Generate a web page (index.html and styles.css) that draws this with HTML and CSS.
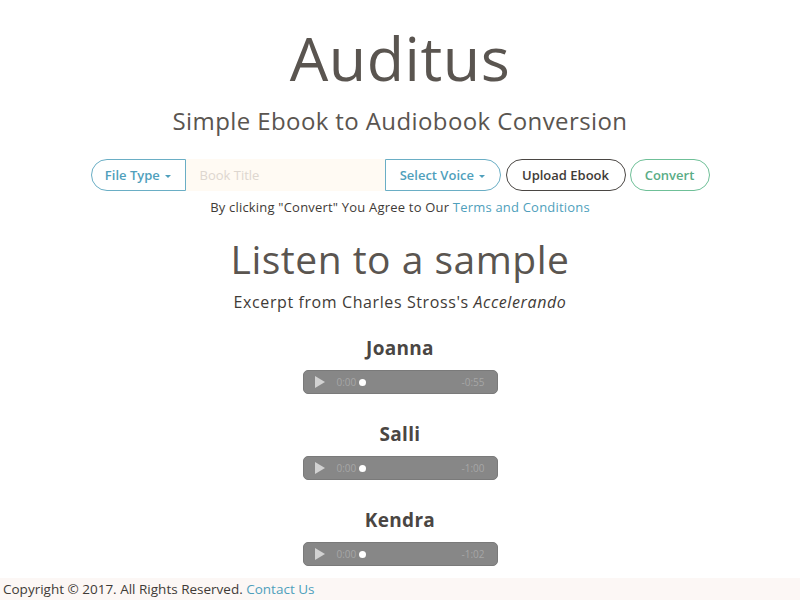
FILE: index.html
```html
<!DOCTYPE html>
<html lang="en">
<head>
<meta charset="utf-8">
<title>Auditus</title>
<link rel="stylesheet" href="styles.css">
</head>
<body>
<main class="page">
  <header class="hero">
    <h1 class="title">Auditus</h1>
    <h2 class="subtitle">Simple Ebook to Audiobook Conversion</h2>
  </header>
  <form class="convert-form">
    <div class="controls">
      <div class="group">
        <button type="button" class="btn btn-teal btn-left">File Type <span class="caret"></span></button>
        <input class="book-title" type="text" placeholder="Book Title">
        <button type="button" class="btn btn-teal btn-right">Select Voice <span class="caret"></span></button>
      </div>
      <button type="button" class="btn btn-dark">Upload Ebook</button>
      <button type="button" class="btn btn-green">Convert</button>
    </div>
    <p class="terms">By clicking "Convert" You Agree to Our <a href="#">Terms and Conditions</a></p>
  </form>
  <section class="samples">
    <h2 class="samples-title">Listen to a sample</h2>
    <p class="excerpt">Excerpt from Charles Stross's <em>Accelerando</em></p>
    <div class="sample">
      <h3 class="voice">Joanna</h3>
      <div class="player"><span class="play"></span><span class="time">0:00</span><span class="knob"></span><span class="remain">-0:55</span></div>
    </div>
    <div class="sample">
      <h3 class="voice">Salli</h3>
      <div class="player"><span class="play"></span><span class="time">0:00</span><span class="knob"></span><span class="remain">-1:00</span></div>
    </div>
    <div class="sample">
      <h3 class="voice">Kendra</h3>
      <div class="player"><span class="play"></span><span class="time">0:00</span><span class="knob"></span><span class="remain">-1:02</span></div>
    </div>
  </section>
</main>
<footer class="footer">Copyright © 2017. All Rights Reserved. <a href="#">Contact Us</a></footer>
</body>
</html>
```

FILE: styles.css
```css
* { box-sizing: border-box; }
html, body { margin: 0; padding: 0; }
body {
  font-family: "Open Sans", "Liberation Sans", sans-serif;
  color: #5a5550;
  background: #fff;
  width: 800px;
  height: 600px;
  overflow: hidden;
  display: flex;
  flex-direction: column;
}
.page {
  flex: 1;
  min-height: 0;
  overflow: hidden;
  display: flex;
  flex-direction: column;
  align-items: center;
}
.hero { text-align: center; padding-top: 20px; }
.title {
  margin: 0;
  font-size: 61px;
  font-weight: 400;
  line-height: 76px;
  letter-spacing: 0.5px;
}
.subtitle {
  margin: 10px 0 0;
  font-size: 24px;
  font-weight: 400;
  line-height: 30px;
  letter-spacing: 0.4px;
}
.convert-form { margin-top: 23px; text-align: center; }
.controls { display: flex; align-items: center; gap: 4px; }
.group { display: flex; align-items: stretch; height: 32px; }
.btn {
  font-family: inherit;
  font-size: 13px;
  font-weight: 600;
  background: #fff;
  height: 32px;
  padding: 0 8px;
  border: 1px solid;
  border-radius: 16px;
  white-space: nowrap;
  cursor: pointer;
}
.btn-teal { color: #4f9fbc; border-color: #6aaec5; }
.btn-left { border-radius: 16px 0 0 16px; width: 95px; }
.btn-right { border-radius: 0 16px 16px 0; width: 116px; }
.caret {
  display: inline-block;
  width: 0; height: 0;
  border-left: 3px solid transparent;
  border-right: 3px solid transparent;
  border-top: 3px solid currentColor;
  vertical-align: middle;
  margin-left: 2px;
}
.book-title {
  width: 199px;
  height: 32px;
  border: none;
  background: #fffaf3;
  font-family: inherit;
  font-size: 13px;
  padding: 0 14px;
  outline: none;
}
.book-title::placeholder { color: #ddd6cf; }
.btn-dark { color: #3f3b37; border: 1.5px solid #4a4643; width: 120px; margin-left: 1px; }
.btn-green { color: #5aac86; border: 1.5px solid #6fc098; width: 80px; }
.terms { margin: 8px 0 0; font-size: 13px; line-height: 16px; color: #3f3b37; letter-spacing: 0.2px; }
a { color: #4f9fbc; text-decoration: none; }
.samples { display: flex; flex-direction: column; align-items: center; }
.samples-title {
  margin: 19px 0 0;
  font-size: 39px;
  font-weight: 400;
  line-height: 50px;
  letter-spacing: 0.5px;
}
.excerpt { margin: 8px 0 0; font-size: 16px; line-height: 20px; color: #3f3b37; letter-spacing: 0.6px; }
.sample { display: flex; flex-direction: column; align-items: center; margin-top: 24px; }
.sample + .sample { margin-top: 28px; }
.voice { margin: 0; font-size: 19px; font-weight: 700; line-height: 24px; color: #4a4643; letter-spacing: 0.3px; }
.player {
  margin-top: 10px;
  width: 195px;
  height: 24px;
  background: #878787;
  border-radius: 5px;
  border: 1px solid #7a7a7a;
  display: flex;
  align-items: center;
  padding: 0 10px;
  font-size: 10px;
  color: #a6a6a6;
}
.play {
  width: 0; height: 0;
  border-top: 6px solid transparent;
  border-bottom: 6px solid transparent;
  border-left: 10px solid #d2d2d2;
  margin-left: 1px;
}
.time { margin-left: 12px; }
.knob { width: 7px; height: 7px; border-radius: 50%; background: #fff; margin-left: 3px; }
.remain { margin-left: auto; margin-right: 2px; }
.footer {
  flex-shrink: 0;
  background: #fcf7f5;
  height: 22px;
  line-height: 22px;
  padding-left: 3px;
  font-size: 13.5px;
  color: #3f3b37;
}
```
